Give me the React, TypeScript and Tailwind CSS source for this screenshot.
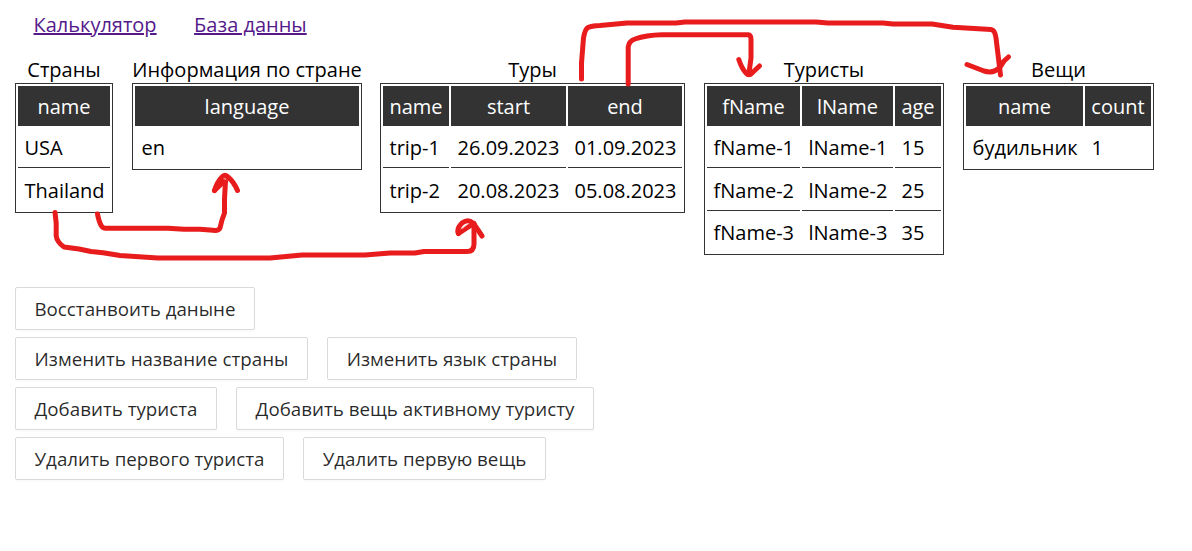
type Column = { label: string; width: string };
type TableData = {
  title: string;
  width: string;
  columns: Column[];
  rows: { height: string; cells: string[] }[];
};

const tables: TableData[] = [
  {
    title: "Страны",
    width: "w-[98px]",
    columns: [{ label: "name", width: "w-[92px]" }],
    rows: [
      { height: "h-[40px]", cells: ["USA"] },
      { height: "h-[40px] pt-[2px]", cells: ["Thailand"] },
    ],
  },
  {
    title: "Информация по стране",
    width: "w-[230px] ml-[19px]",
    columns: [{ label: "language", width: "w-[224px]" }],
    rows: [{ height: "h-[39px]", cells: ["en"] }],
  },
  {
    title: "Туры",
    width: "w-[305px] ml-[18px]",
    columns: [
      { label: "name", width: "w-[66px]" },
      { label: "start", width: "w-[115px]" },
      { label: "end", width: "w-[114px]" },
    ],
    rows: [
      { height: "h-[40px]", cells: ["trip-1", "26.09.2023", "01.09.2023"] },
      { height: "h-[40px] pt-[2px]", cells: ["trip-2", "20.08.2023", "05.08.2023"] },
    ],
  },
  {
    title: "Туристы",
    width: "w-[240px] ml-[19px]",
    columns: [
      { label: "fName", width: "w-[93px]" },
      { label: "lName", width: "w-[91px]" },
      { label: "age", width: "w-[46px]" },
    ],
    rows: [
      { height: "h-[40px]", cells: ["fName-1", "lName-1", "15"] },
      { height: "h-[41px] pt-[2px]", cells: ["fName-2", "lName-2", "25"] },
      { height: "h-[39px]", cells: ["fName-3", "lName-3", "35"] },
    ],
  },
  {
    title: "Вещи",
    width: "w-[191px] ml-[19px]",
    columns: [
      { label: "name", width: "w-[117px]" },
      { label: "count", width: "w-[66px]" },
    ],
    rows: [{ height: "h-[39px]", cells: ["будильник", "1"] }],
  },
];

const actions = [
  [{ label: "Восстанвоить даныне", width: "w-[240px]" }],
  [
    { label: "Изменить название страны", width: "w-[293px]" },
    { label: "Изменить язык страны", width: "w-[250px]" },
  ],
  [
    { label: "Добавить туриста", width: "w-[202px]" },
    { label: "Добавить вещь активному туристу", width: "w-[358px]" },
  ],
  [
    { label: "Удалить первого туриста", width: "w-[269px]" },
    { label: "Удалить первую вещь", width: "w-[243px]" },
  ],
];

function DataTable({ data }: { data: TableData }) {
  return (
    <section className={`shrink-0 ${data.width}`}>
      <h2 className="h-[27px] text-center leading-[27px] whitespace-nowrap">{data.title}</h2>
      <table className="w-full table-fixed border-separate border-spacing-[2px] border border-[#333]">
        <thead>
          <tr>
            {data.columns.map((c) => (
              <th key={c.label} className={`h-[40px] bg-[#333] p-0 pt-px text-center leading-[30px] font-normal text-white ${c.width}`}>
                {c.label}
              </th>
            ))}
          </tr>
        </thead>
        <tbody>
          {data.rows.map((row, i) => (
            <tr key={i}>
              {row.cells.map((cell) => (
                <td
                  key={cell}
                  className={`p-0 pl-[6.5px] leading-[30px] whitespace-nowrap ${row.height} ${
                    i < data.rows.length - 1 ? "border-b border-[#333]" : ""
                  }`}
                >
                  {cell}
                </td>
              ))}
            </tr>
          ))}
        </tbody>
      </table>
    </section>
  );
}

function Arrows() {
  return (
    <svg
      className="pointer-events-none absolute top-0 left-0"
      width="1192"
      height="551"
      fill="none"
      stroke="#e81c1c"
      strokeWidth="5"
      strokeLinecap="round"
      strokeLinejoin="round"
    >
      <path d="M97.5 214 Q99 222 101.500 226 Q103 228.500 106 228.300 H168 L184 229.300 H200 L213 230.300 Q219 231 220 228 L222 220 L224.500 213 V199 L225.500 181" />
      <path d="M214.500 190.500 Q217 182 222 177 Q225 173.500 228 177 Q234 182 237.500 190.500" />
      <path d="M214.500 190.500 L224.500 181 L218 185" />
      <path d="M223.800 178.800 L226 179.600" stroke="#f4a0a0" strokeWidth="0.8" />
      <path d="M55 212.500 L56.200 223 V236 Q57 242 64 247 L79 249 L91 251.500 L103 252.800 L120 255.500 L158 258 H270 L302 255 H365 L390 253 H415 L424 251.500 H467 Q474 251.500 474 244 V224" />
      <path d="M458.500 233.500 Q456 229 462 223 Q468 218.500 473 223 L476 227 L482 236" />
      <path d="M458.500 233.500 L466 228.500 L474 223.500" />
      <path d="M462.500 228.500 L467.500 224.300" stroke="#f4a0a0" strokeWidth="1" />
      <path d="M581.500 79 V63 L583.500 38 Q585 29 588 27.500 Q591 26 600 25.500 L627 23 H676 L685 22 H816 L828 23 H883 L893 24 H932 L953 27.200 L991 29.500 Q995 30 996 38 L1000.500 75" />
      <path d="M967 64.500 L984 71 Q994 74 1000 67 L1004 61 L1008.500 57" />
      <path d="M628.200 84 V47 Q629 41 635 39 Q646 35 662 34.700 H748 Q751 35 751 39 V58 L749 73" />
      <path d="M738.800 59.500 Q742 69 746 73 Q749 76.500 752 73 L759.500 66" />
    </svg>
  );
}

export default function App() {
  return (
    <main
      className="relative h-[551px] w-[1192px] overflow-hidden bg-white text-[20px] font-normal text-black"
      style={{ fontFamily: '"Open Sans", sans-serif' }}
    >
      <nav className="flex h-[56px] gap-[37.5px] pt-[10px] pl-[33.5px] leading-[30px] text-[#551a8b]">
        <a className="underline" href="#calculator">Калькулятор</a>
        <a className="underline" href="#database">База данны</a>
      </nav>
      <div className="flex h-[231px] items-start pl-[15px]">
        {tables.map((t) => (
          <DataTable key={t.title} data={t} />
        ))}
      </div>
      <div className="flex flex-col gap-[7px] pl-[15px]">
        {actions.map((row, i) => (
          <div key={i} className="flex gap-[19px]">
            {row.map((a) => (
              <button
                key={a.label}
                className={`h-[43px] rounded-[2px] border border-[#d9d9d9] bg-white text-center text-[18.75px] leading-[30px] whitespace-nowrap text-black/85 shadow-[0_2px_0_rgba(0,0,0,0.015)] ${a.width}`}
              >
                {a.label}
              </button>
            ))}
          </div>
        ))}
      </div>
      <Arrows />
    </main>
  );
}
